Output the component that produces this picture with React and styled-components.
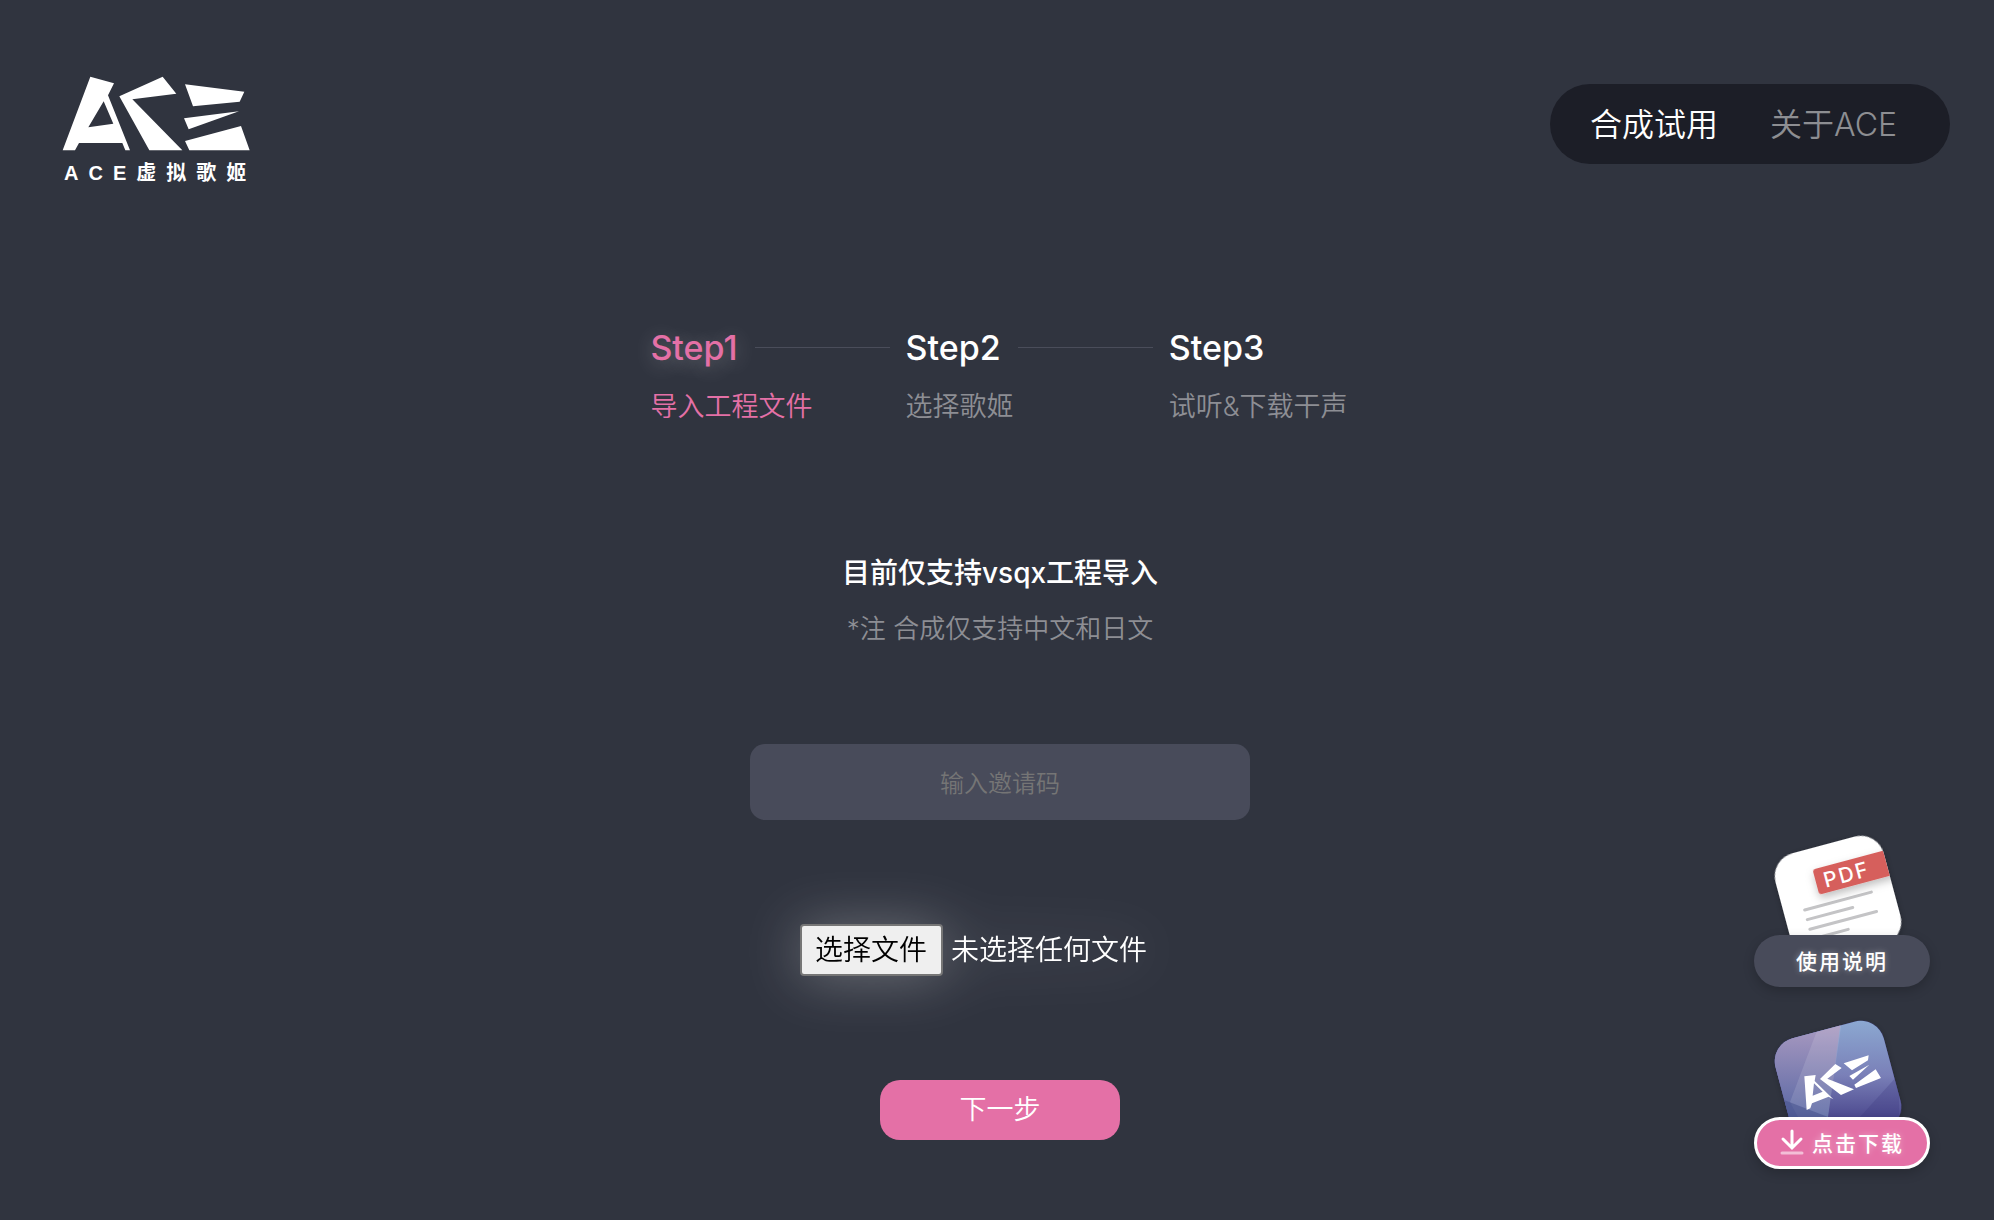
import { useRef, useState } from "react";
import styled, { createGlobalStyle } from "styled-components";

const GlobalStyle = createGlobalStyle`
  * {
    box-sizing: border-box;
  }

  body {
    margin: 0;
    background-color: #30343f;
    color: #fff;
    font-family: Inter, "Noto Sans CJK SC", sans-serif;
    font-weight: 350;
  }

  button, input {
    font: inherit;
  }
`;

const Page = styled.div`
  min-height: 100vh;
  display: flex;
  flex-direction: column;
`;

const Header = styled.header`
  display: flex;
  justify-content: space-between;
  align-items: flex-start;
  padding: 76px 44px 0 62px;
`;

const Logo = styled.a`
  display: grid;
  color: inherit;
  text-decoration: none;
`;

const LogoMark = styled.svg`
  width: 188px;
  height: 75px;
`;

const LogoName = styled.span`
  margin-top: 8px;
  padding-left: 2px;
  font-family: "Liberation Sans", "Noto Sans CJK SC", sans-serif;
  font-size: 20px;
  font-weight: 700;
  line-height: 28px;
  letter-spacing: 10px;
`;

const Nav = styled.nav`
  display: flex;
  gap: 52px;
  margin-top: 8px;
  padding: 17px 53px 15px 40px;
  border-radius: 40px;
  background-color: #1c1e27;
`;

const NavLink = styled.a`
  font-size: 32px;
  line-height: 48px;
  text-decoration: none;
  color: ${({ $active }) => ($active ? "#fff" : "#8d8e92")};
`;

const Content = styled.div`
  flex: 1;
  display: grid;
  grid-template-columns: 1fr auto 1fr;
  padding: 0 44px 51px 50px;
`;

const Main = styled.main`
  grid-column: 2;
  display: flex;
  flex-direction: column;
  align-items: center;
  padding-top: 133px;
`;

const Steps = styled.ol`
  display: flex;
  margin: 0;
  padding: 0 2px 0 0;
  list-style: none;
`;

const Step = styled.li`
  color: ${({ $active }) => ($active ? "#e470a6" : "#8d8e94")};
`;

const StepHead = styled.div`
  display: flex;
  align-items: center;
  height: 54px;

  &::after {
    content: "";
    width: 135px;
    height: 1px;
    margin: 0 16px 0 17px;
    background-color: #4a4d5a;
  }

  ${Step}:last-child &::after {
    display: none;
  }
`;

const StepTitle = styled.strong`
  font-size: 34px;
  font-weight: 500;
  color: ${({ $active }) => ($active ? "#e470a6" : "#fff")};
  text-shadow: ${({ $active }) => ($active ? "0 4px 20px rgba(255, 255, 255, 0.3)" : "none")};
`;

const StepText = styled.p`
  margin: 13px 0 0;
  font-size: 27px;
  line-height: 40px;
`;

const Title = styled.h1`
  margin: 126px 0 0;
  font-size: 28px;
  font-weight: 500;
  line-height: 40px;
`;

const Note = styled.p`
  margin: 16px 0 0;
  font-size: 26px;
  line-height: 40px;
  color: #8d8e94;
`;

const CodeInput = styled.input`
  width: 500px;
  height: 76px;
  margin-top: 95px;
  padding: 2px 0 0;
  border: 0;
  border-radius: 15px;
  background-color: #484b5a;
  color: #fff;
  font-size: 24px;
  text-align: center;

  &::placeholder {
    color: #757575;
    opacity: 1;
  }
`;

const FilePicker = styled.div`
  display: flex;
  align-items: center;
  gap: 8px;
  width: 400px;
  margin-top: 104px;
  font-size: 28px;
  line-height: 40px;
  filter: drop-shadow(0 2px 28px rgba(255, 255, 255, 0.3));
`;

const FileButton = styled.button`
  padding: 4px 14px 4px 13px;
  border: 2px solid #767676;
  border-radius: 4px;
  background-color: #efefef;
  color: #000;
`;

const NextButton = styled.button`
  width: 240px;
  height: 60px;
  margin-top: 104px;
  padding: 0 0 6px;
  border: 0;
  border-radius: 20px;
  background-color: #e470a6;
  color: #fff;
  font-size: 27px;
`;

const Aside = styled.aside`
  display: grid;
  gap: 23px;
  align-self: end;
  justify-self: end;
  padding-right: 20px;
`;

const Badge = styled.a`
  display: grid;
  width: 176px;
  color: #fff;
  text-decoration: none;
`;

const BadgeArt = styled.svg`
  width: 100%;
`;

const BadgeLabel = styled.span`
  display: flex;
  align-items: center;
  justify-content: center;
  gap: 8px;
  height: 52px;
  padding-bottom: 2px;
  border: ${({ $primary }) => ($primary ? "3px solid #fff" : "0")};
  border-radius: 26px;
  background-color: ${({ $primary }) => ($primary ? "#e470a6" : "#484b5a")};
  box-shadow: 0 4px 12px rgba(0, 0, 0, 0.2);
  font-size: 21px;
  font-weight: 500;
  letter-spacing: 2px;
  text-shadow: 0 0 6px rgba(255, 255, 255, 0.4);
`;

const steps = [
  { title: "Step1", text: "导入工程文件" },
  { title: "Step2", text: "选择歌姬" },
  { title: "Step3", text: "试听&下载干声" },
];

const AceMark = () => (
  <LogoMark viewBox="66 48 564 225" fill="#fff" aria-hidden="true">
    <path
      fillRule="evenodd"
      d="M151 50 222 70 204 106 270 271H256L247 249H117L105 271H68ZM191 124 145 202 220 191Z"
    />
    <path d="M238 109 368 50 409 101 277 118 427 271H328Z" />
    <path d="M435 73 613 95 599 125 459 139ZM432 175 597 154 446 208ZM435 243 603 198 629 271H448Z" />
  </LogoMark>
);

const PdfArt = () => (
  <BadgeArt viewBox="0 0 176 110" height="110" aria-hidden="true">
    <defs>
      <filter id="bandShadow" x="-20%" y="-50%" width="140%" height="220%">
        <feDropShadow dx="0" dy="4" stdDeviation="4" floodOpacity="0.25" />
      </filter>
      <filter id="cardShadow">
        <feDropShadow dx="0" dy="2" stdDeviation="3" floodOpacity="0.25" />
      </filter>
      <clipPath id="pdfCard">
        <rect x="-56" y="-56" width="112" height="112" rx="24" />
      </clipPath>
    </defs>
    <g transform="translate(84 74) rotate(-15)">
      <rect x="-56" y="-56" width="112" height="112" rx="24" fill="#fff" filter="url(#cardShadow)" />
      <g clipPath="url(#pdfCard)">
        <path
          d="M-35 2H34M-35 12H12M-35 22H34M-35 32H2"
          stroke="#c4c4c6"
          strokeWidth="3"
          strokeLinecap="round"
        />
        <rect x="-17" y="-35" width="80" height="26" rx="3" fill="#d65f5c" filter="url(#bandShadow)" />
      </g>
      <text x="-9" y="-14" fill="#fff" fontSize="21" fontWeight="500" letterSpacing="2">
        PDF
      </text>
    </g>
  </BadgeArt>
);

const AppArt = () => (
  <BadgeArt viewBox="0 0 176 107" height="107" aria-hidden="true">
    <defs>
      <linearGradient id="sky" x1="0.6" y1="0" x2="0.6" y2="1">
        <stop offset="0" stopColor="#8fb0d6" />
        <stop offset="0.5" stopColor="#7a80b8" />
        <stop offset="0.9" stopColor="#433e86" />
      </linearGradient>
      <linearGradient id="haze" x1="0" y1="0" x2="0" y2="1">
        <stop offset="0" stopColor="#ad9cc2" />
        <stop offset="1" stopColor="#5a68a4" />
      </linearGradient>
      <clipPath id="appCard">
        <rect x="28" y="18" width="112" height="112" rx="24" transform="rotate(-15 84 74)" />
      </clipPath>
    </defs>
    <rect
      x="28"
      y="18"
      width="112"
      height="112"
      rx="24"
      transform="rotate(-15 84 74)"
      fill="#433e86"
      filter="url(#cardShadow)"
    />
    <g clipPath="url(#appCard)">
      <path d="M0 0H176V130H0Z" fill="url(#sky)" />
      <path d="M0 10H87L74 107H0Z" fill="url(#haze)" />
      <path d="M64 18 88 10 74 107H44L36 92Z" fill="#fff" opacity="0.12" />
      <path d="M30 90 74 107V130H30Z" fill="#4a5590" opacity="0.6" />
      <path d="M145 64 106 107H145Z" fill="#39327a" opacity="0.25" />
      <g transform="scale(0.3333) translate(-42 -30)" fill="#fff">
        <path
          fillRule="evenodd"
          d="M193 229 227 225 224 243 280 298 266 290 216 310 211 325 200 330ZM222 250 218 287 248 275Z"
        />
        <path d="M240 237 286 192 305 204 262 236 342 268 303 285Z" />
        <path d="M311 190 386 166 384 181 336 211ZM328 228 388 194 339 239ZM343 254 407 208 423 234 348 264Z" />
      </g>
    </g>
  </BadgeArt>
);

const DownloadIcon = () => (
  <svg width="24" height="26" viewBox="0 0 24 26" fill="none" stroke="#fff" strokeWidth="3" strokeLinecap="round" aria-hidden="true">
    <path d="M12 2V18M3 10 12 19 21 10" />
    <path d="M2 24H22" opacity="0.55" />
  </svg>
);

const App = () => {
  const fileInput = useRef(null);
  const [fileName, setFileName] = useState("");

  return (
    <Page>
      <GlobalStyle />
      <Header>
        <Logo href="#home">
          <AceMark />
          <LogoName>ACE虚拟歌姬</LogoName>
        </Logo>
        <Nav>
          <NavLink href="#trial" $active>合成试用</NavLink>
          <NavLink href="#about">关于ACE</NavLink>
        </Nav>
      </Header>
      <Content>
        <Main>
          <Steps>
            {steps.map((step, i) => (
              <Step key={step.title} $active={i === 0}>
                <StepHead>
                  <StepTitle $active={i === 0}>{step.title}</StepTitle>
                </StepHead>
                <StepText>{step.text}</StepText>
              </Step>
            ))}
          </Steps>
          <Title>目前仅支持vsqx工程导入</Title>
          <Note>*注 合成仅支持中文和日文</Note>
          <CodeInput type="text" placeholder="输入邀请码" aria-label="输入邀请码" />
          <FilePicker>
            <input
              ref={fileInput}
              type="file"
              accept=".vsqx"
              hidden
              aria-label="选择文件"
              onChange={(e) => setFileName(e.target.files[0]?.name ?? "")}
            />
            <FileButton type="button" onClick={() => fileInput.current.click()}>选择文件</FileButton>
            <span>{fileName || "未选择任何文件"}</span>
          </FilePicker>
          <NextButton type="button">下一步</NextButton>
        </Main>
        <Aside>
          <Badge href="#manual">
            <PdfArt />
            <BadgeLabel>使用说明</BadgeLabel>
          </Badge>
          <Badge href="#download">
            <AppArt />
            <BadgeLabel $primary>
              <DownloadIcon />
              点击下载
            </BadgeLabel>
          </Badge>
        </Aside>
      </Content>
    </Page>
  );
};

export default App;
